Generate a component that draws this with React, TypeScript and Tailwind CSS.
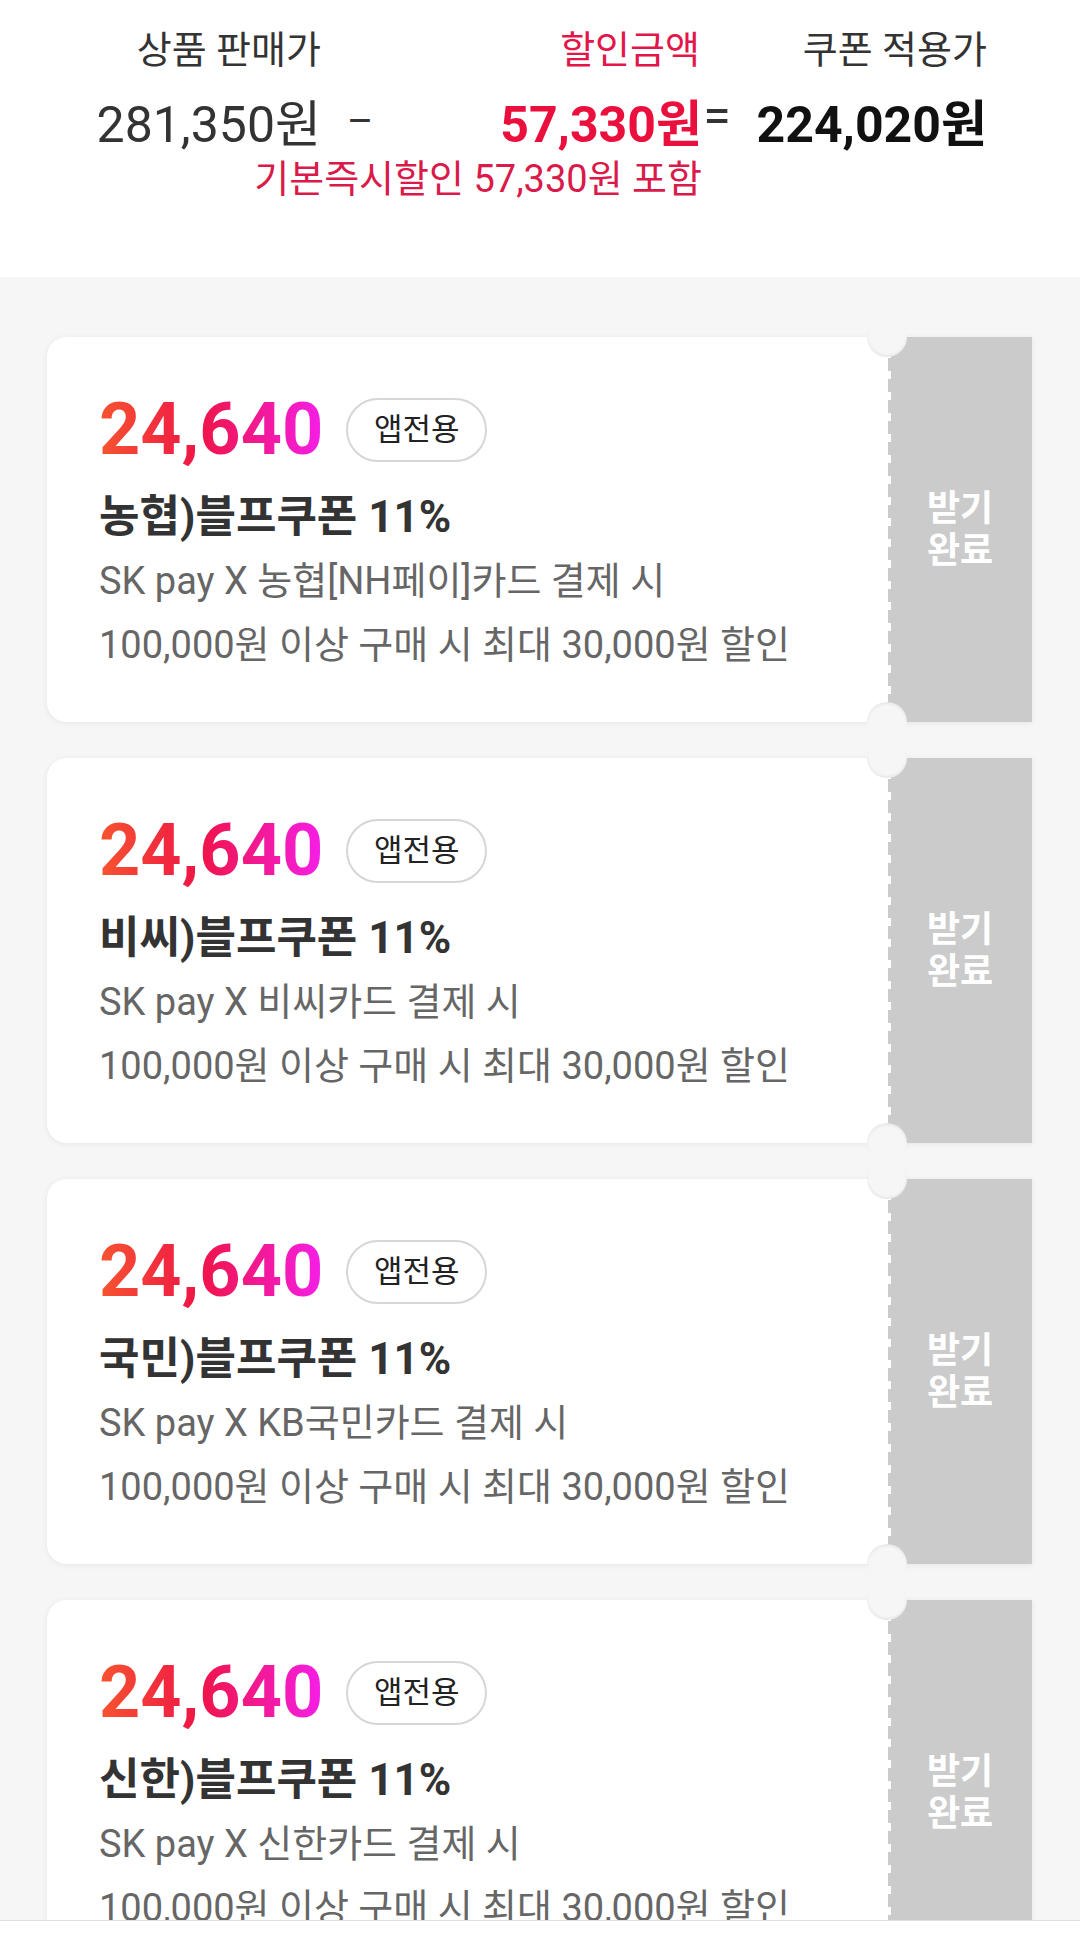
import React from "react";

const FONT = { fontFamily: 'Roboto, "Noto Sans CJK KR", sans-serif' };

type Coupon = { bank: string; card: string };

const coupons: Coupon[] = [
  { bank: "농협", card: "농협[NH페이]카드" },
  { bank: "비씨", card: "비씨카드" },
  { bank: "국민", card: "KB국민카드" },
  { bank: "신한", card: "신한카드" },
];

function CouponCard({ c }: { c: Coupon }) {
  return (
    <div className="relative flex h-[385px] w-full shrink-0 shadow-[0_1px_6px_rgba(0,0,0,0.07)] rounded-l-[20px]">
      <div className="flex-1 rounded-l-[20px] bg-white pl-[52px] pt-[59px]">
        <div className="flex h-[68px] items-center">
          <span className="bg-[linear-gradient(to_right,#f6542f_0%,#ef1446_45%,#f61ee9_100%)] bg-clip-text text-[72px] font-bold leading-[72px] text-transparent">
            24,640
          </span>
          <span className="ml-[23px] flex h-[64px] w-[141px] items-center justify-center rounded-full border-2 border-[#d6d6d6] text-[31px] text-[#222]">
            앱전용
          </span>
        </div>
        <div className="mt-[25px] h-[56px] whitespace-nowrap text-[44px] font-bold leading-[56px] text-[#333]">
          {c.bank})블프쿠폰 11%
        </div>
        <div className="mt-[4px] h-[64px] whitespace-nowrap text-[38px] leading-[64px] text-[#666]">
          SK pay X {c.card} 결제 시
        </div>
        <div className="h-[64px] whitespace-nowrap text-[38px] leading-[64px] text-[#666]">
          100,000원 이상 구매 시 최대 30,000원 할인
        </div>
      </div>
      <div className="flex w-[144px] bg-[#cbcbcb]">
        <div className="h-full w-[3px] bg-[repeating-linear-gradient(to_bottom,#cbcbcb_0px,#cbcbcb_13px,#ffffff_13px,#ffffff_21px)]" />
        <div className="flex flex-1 flex-col items-center justify-center pr-[3px] text-[36px] font-bold leading-[42px] text-white">
          <span>받기</span>
          <span>완료</span>
        </div>
      </div>
      <div className="absolute left-[820px] top-[-20px] h-[40px] w-[40px] rounded-full bg-[#f6f6f6] shadow-[inset_0_-2px_3px_rgba(0,0,0,0.06)]" />
      <div className="absolute left-[820px] bottom-[-20px] h-[40px] w-[40px] rounded-full bg-[#f6f6f6] shadow-[inset_0_2px_3px_rgba(0,0,0,0.06)]" />
    </div>
  );
}

export default function App() {
  return (
    <div style={FONT} className="flex h-[1937px] w-[1080px] flex-col overflow-hidden bg-white">
      <div className="h-[277px] shrink-0 bg-white pt-[30px]">
        <div className="flex">
          <div className="flex w-[321px] flex-col items-end">
            <div className="h-[40px] whitespace-nowrap text-[38px] leading-[40px] text-[#333]">상품 판매가</div>
            <div className="mt-[27px] h-[56px] whitespace-nowrap text-[50px] leading-[56px] text-[#333]">281,350원</div>
          </div>
          <div className="w-[60px] pt-[67px]">
            <div className="relative left-[9px] top-[-3px] h-[56px] text-center text-[40px] leading-[56px] text-[#333]">–</div>
          </div>
          <div className="flex w-[321px] flex-col items-end">
            <div className="h-[40px] whitespace-nowrap pr-[2px] text-[38px] leading-[40px] text-[#e3164a]">할인금액</div>
            <div className="mt-[27px] h-[56px] whitespace-nowrap text-[50px] font-bold leading-[56px] text-[#ea0f3d]">57,330원</div>
            <div className="mt-[6px] flex w-full justify-end">
              <div className="h-[40px] shrink-0 whitespace-nowrap text-[38px] leading-[40px] text-[#d91a4a]">
                기본즉시할인 57,330원 포함
              </div>
            </div>
          </div>
          <div className="w-[30px] pt-[67px]">
            <div className="relative top-[-9px] h-[56px] text-center text-[50px] leading-[56px] text-[#333]">=</div>
          </div>
          <div className="flex w-[255px] flex-col items-end">
            <div className="h-[40px] whitespace-nowrap text-[38px] leading-[40px] text-[#333]">쿠폰 적용가</div>
            <div className="mt-[27px] h-[56px] whitespace-nowrap text-[50px] font-bold leading-[56px] text-[#111]">224,020원</div>
          </div>
        </div>
      </div>
      <div className="flex flex-1 flex-col gap-[36px] overflow-hidden bg-[#f6f6f6] pl-[47px] pr-[48px] pt-[60px]">
        {coupons.map((c) => (
          <CouponCard key={c.bank} c={c} />
        ))}
      </div>
      <div className="h-[17px] shrink-0 border-t border-[#e0e0e0] bg-white" />
    </div>
  );
}
